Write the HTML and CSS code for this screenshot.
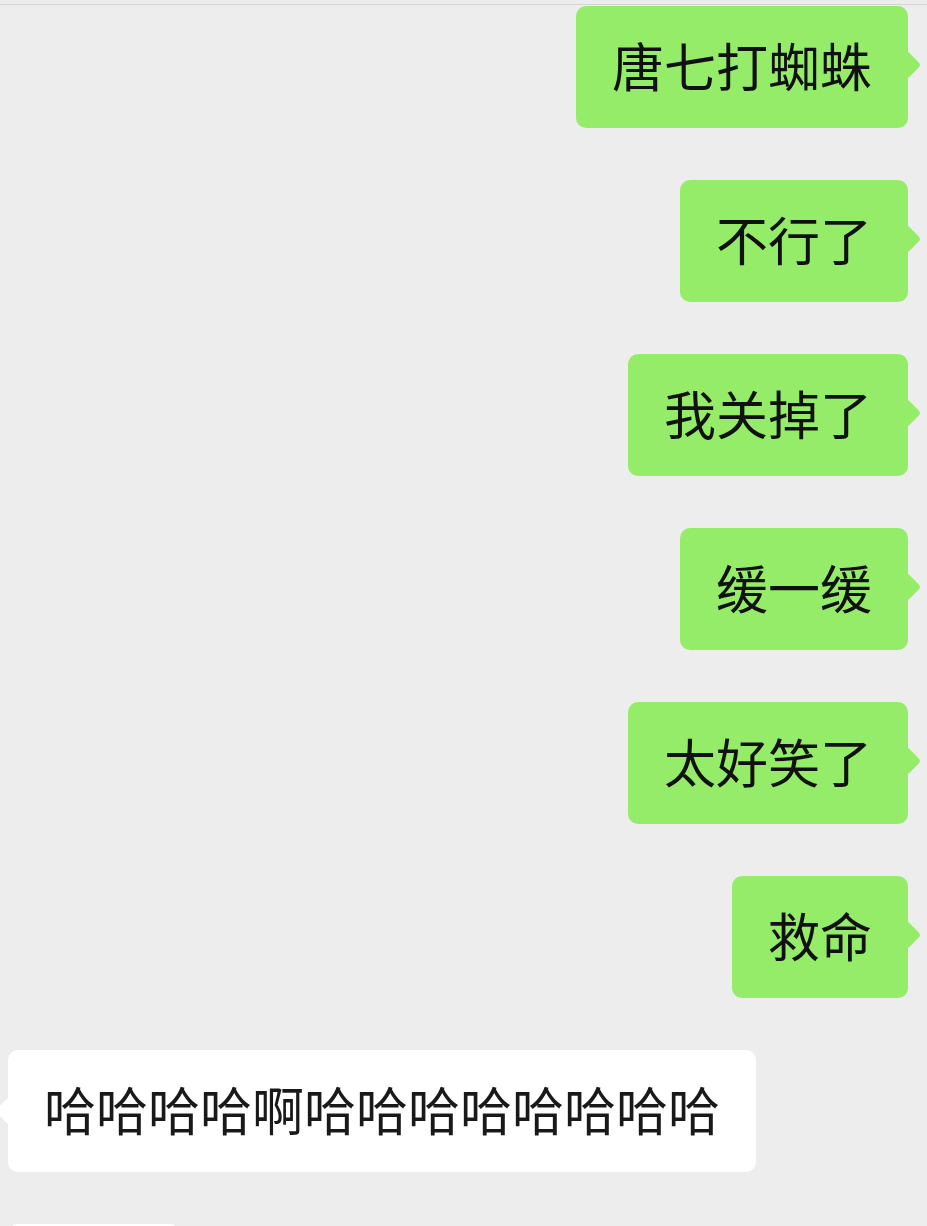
FILE: index.html
```html
<!DOCTYPE html>
<html>
<head>
    <meta charset="utf-8">
    <title>聊天</title>
    <link rel="stylesheet" href="styles.css">
</head>
<body>
    <div class="topline"></div>
    <div class="chat">
        <div class="row mine"><div class="bubble">唐七打蜘蛛</div></div>
        <div class="row mine"><div class="bubble">不行了</div></div>
        <div class="row mine"><div class="bubble">我关掉了</div></div>
        <div class="row mine"><div class="bubble">缓一缓</div></div>
        <div class="row mine"><div class="bubble">太好笑了</div></div>
        <div class="row mine"><div class="bubble">救命</div></div>
        <div class="row theirs"><div class="bubble">哈哈哈哈啊哈哈哈哈哈哈哈哈</div></div>
        <div class="row theirs"><div class="bubble peek"></div></div>
    </div>
</body>
</html>
```

FILE: styles.css
```css
html, body {
    margin: 0;
    padding: 0;
    background-color: #ededed;
    height: 100%;
    overflow: hidden;
}

body {
    font-family: "Noto Sans CJK SC", "Noto Sans", sans-serif;
}

.topline {
    height: 4px;
    background-color: #ececec;
    border-bottom: 1px solid #d4d4d4;
}

.chat {
    display: flex;
    flex-direction: column;
    gap: 52px;
    padding: 1px 19px 0 8px;
}

.row {
    display: flex;
}

.row.mine {
    justify-content: flex-end;
}

.row.theirs {
    justify-content: flex-start;
}

.bubble {
    position: relative;
    font-size: 52px;
    line-height: 62px;
    padding: 28px 36px 32px;
    border-radius: 10px;
    color: #111;
    white-space: nowrap;
}

.mine .bubble {
    background-color: #95ec69;
}

.theirs .bubble {
    background-color: #fff;
    color: #191919;
}

/* la punta della nuvoletta */
.bubble::after {
    content: "";
    position: absolute;
    top: 50%;
    width: 21px;
    height: 21px;
    border-radius: 4px;
    background-color: inherit;
    transform: translateY(-50%) rotate(45deg);
}

.mine .bubble::after {
    right: -9px;
    margin-top: -2px;
}

.theirs .bubble::after {
    left: -9px;
}

/* l'ultima nuvoletta, tagliata dal bordo */
.bubble.peek {
    width: 100px;
    height: 62px;
}
```
